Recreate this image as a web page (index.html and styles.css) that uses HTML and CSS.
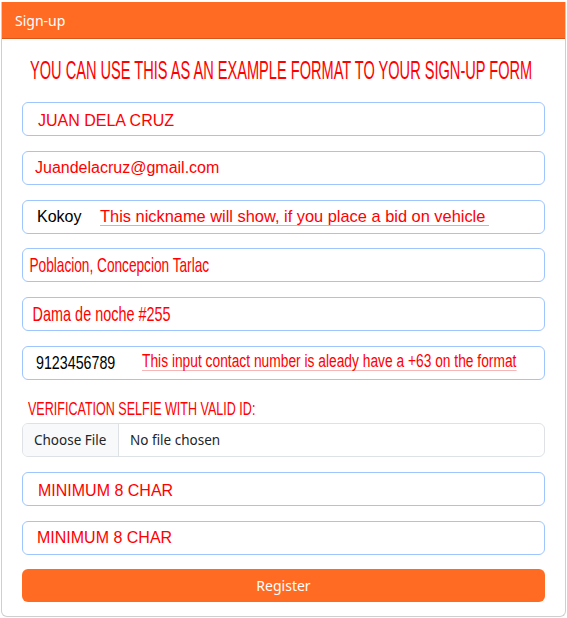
FILE: index.html
```html
<!DOCTYPE html>
<html lang="en">
<head>
<meta charset="utf-8">
<title>Sign-up</title>
<link rel="stylesheet" href="styles.css">
</head>
<body>
<div class="card">
  <div class="card-header">Sign-up</div>
  <div class="card-body">
    <h1 class="title"><span class="narrow n-title">YOU CAN USE THIS AS AN EXAMPLE FORMAT TO YOUR SIGN-UP FORM</span></h1>
    <div class="field"><span class="red pl16 low">JUAN DELA CRUZ</span></div>
    <div class="field"><span class="red pl13">Juandelacruz@gmail.com</span></div>
    <div class="field">
      <span class="black nick">Kokoy</span>
      <span class="red note">This nickname will show, if you place a bid on vehicle</span>
    </div>
    <div class="field"><span class="narrow red n-addr">Poblacion, Concepcion Tarlac</span></div>
    <div class="field"><span class="narrow red n-street">Dama de noche #255</span></div>
    <div class="field">
      <span class="num-box"><span class="narrow black n-num">9123456789</span></span>
      <span class="narrow red n-note">This input contact number is aleady have a +63 on the format</span>
    </div>
    <div class="label"><span class="narrow n-label">VERIFICATION SELFIE WITH VALID ID:</span></div>
    <div class="file">
      <span class="file-btn">Choose File</span>
      <span class="file-name">No file chosen</span>
    </div>
    <div class="field gap-top"><span class="red pl16 low">MINIMUM 8 CHAR</span></div>
    <div class="field"><span class="red pl15">MINIMUM 8 CHAR</span></div>
    <button class="btn" type="button">Register</button>
  </div>
</div>
</body>
</html>
```
FILE: styles.css
```css
html, body {
  margin: 0;
  padding: 0;
  background: #ffffff;
}
body {
  padding: 2px 2px 0 1px;
  font-family: "Noto Sans", "Open Sans", sans-serif;
}
.card {
  width: 565px;
  box-sizing: border-box;
  border: 1px solid #cfcfcf;
  border-top: none;
  border-radius: 0 0 6px 6px;
  overflow: hidden;
}
.card-header {
  background: #ff6b22;
  color: #ffffff;
  height: 37px;
  box-sizing: border-box;
  border-bottom: 1px solid #d9561a;
  padding: 0 14px;
  margin: 0 -1px;
  display: flex;
  align-items: center;
  font-size: 14px;
}
.card-body {
  padding: 0 20px 14px 20px;
  display: flex;
  flex-direction: column;
}
.title {
  margin: 0;
  height: 63px;
  display: flex;
  align-items: center;
  padding-left: 8px;
  font-weight: normal;
  white-space: nowrap;
}
.narrow {
  display: inline-block;
  transform-origin: left center;
  white-space: nowrap;
  font-family: "Liberation Sans", Arial, sans-serif;
}
.n-title {
  color: #ff0000;
  font-size: 25.5px;
  transform: scaleX(0.572);
}
.field {
  height: 34px;
  box-sizing: border-box;
  border: 1px solid #9ec5fe;
  border-radius: 6px;
  display: flex;
  align-items: center;
  margin-bottom: 14.8px;
  font-family: "Liberation Sans", Arial, sans-serif;
  font-size: 16px;
  white-space: nowrap;
}
.red { color: #ff0000; }
.black { color: #000000; }
.pl16 { padding-left: 15px; }
.pl15 { padding-left: 14px; }
.pl13 { padding-left: 12px; }
.low { padding-top: 4px; }
.nick {
  padding-left: 14px;
  width: 63px;
  font-size: 16px;
}
.note {
  font-size: 16.4px;
  border-bottom: 1px solid #f7a3a3;
  padding-right: 4px;
  line-height: 17px;
  margin-top: 1px;
}
.n-addr {
  padding-left: 10px;
  font-size: 21px;
  transform: scaleX(0.65);
}
.n-street {
  padding-left: 14px;
  font-size: 21px;
  transform: scaleX(0.687);
}
.num-box {
  flex: none;
  width: 119px;
  padding-left: 13px;
  box-sizing: border-box;
}
.n-num {
  font-size: 19px;
  transform: scaleX(0.75);
}
.n-note {
  font-size: 18px;
  transform: scaleX(0.766);
  border-bottom: 1px solid #f7b5b5;
  line-height: 18px;
  margin-top: -2px;
}
.label {
  height: 28px;
  display: flex;
  align-items: center;
  padding-left: 6px;
}
.n-label {
  color: #ff0000;
  font-size: 19px;
  transform: scaleX(0.66);
}
.file {
  height: 34px;
  box-sizing: border-box;
  border: 1px solid #dee2e6;
  border-radius: 6px;
  display: flex;
  align-items: stretch;
  overflow: hidden;
  font-size: 13.5px;
  color: #212529;
  font-family: "Noto Sans", "Open Sans", sans-serif;
}
.file-btn {
  background: #f8f9fa;
  border-right: 1px solid #dee2e6;
  display: flex;
  align-items: center;
  padding: 0 11px;
  width: 96px;
  box-sizing: border-box;
}
.file-name {
  display: flex;
  align-items: center;
  padding-left: 11px;
}
.gap-top { margin-top: 15px; }
.btn {
  height: 33px;
  border: none;
  border-radius: 6px;
  background: #ff6b22;
  color: #ffffff;
  font-family: "Noto Sans", "Open Sans", sans-serif;
  font-size: 14px;
  margin: 0;
  padding: 0;
}
```
